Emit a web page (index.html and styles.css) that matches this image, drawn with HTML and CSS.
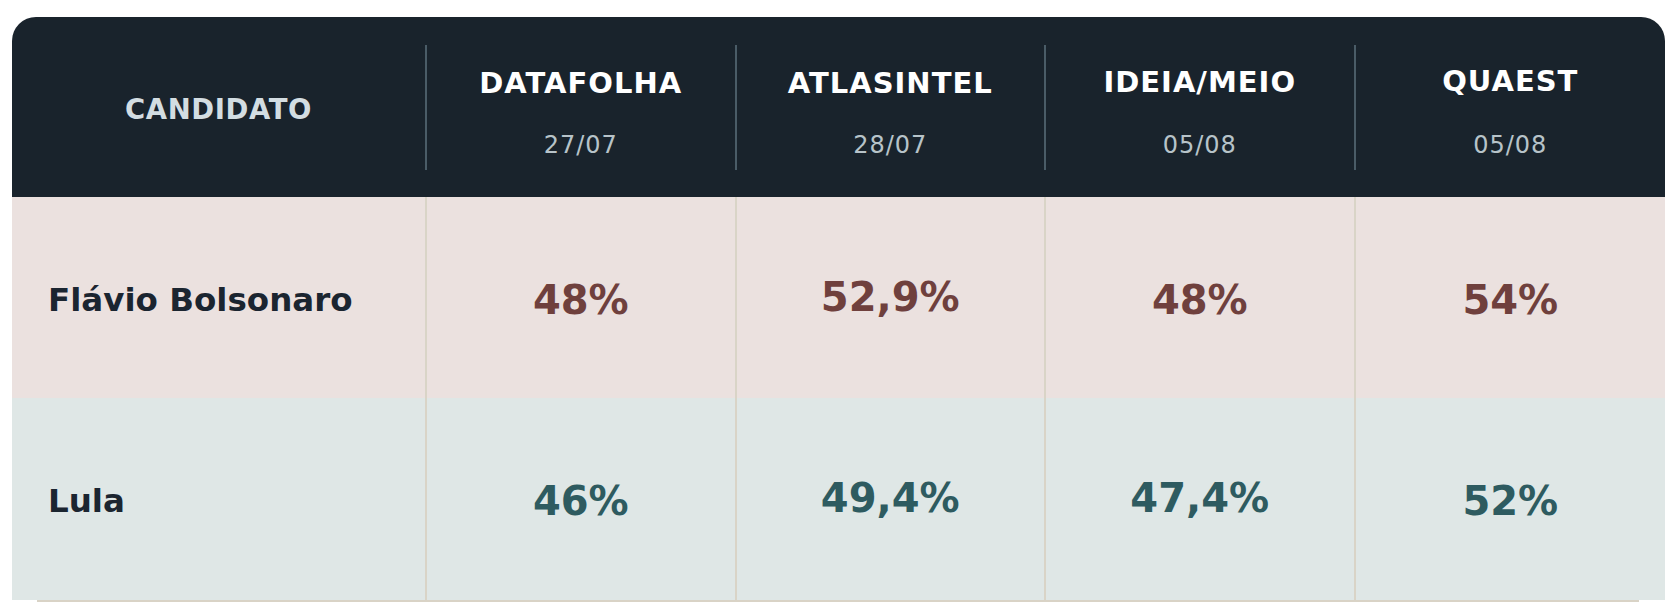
FILE: index.html
```html
<!DOCTYPE html>
<html lang="pt-BR">
<head>
<meta charset="utf-8">
<title>Pesquisas</title>
<link rel="stylesheet" href="styles.css">
</head>
<body>
<div class="card">
  <div class="row head">
    <div class="hcell first"><span class="cand">CANDIDATO</span></div>
    <div class="hcell poll"><span class="pname">DATAFOLHA</span><span class="pdate">27/07</span></div>
    <div class="hcell poll"><span class="pname">ATLASINTEL</span><span class="pdate">28/07</span></div>
    <div class="hcell poll"><span class="pname up1">IDEIA/MEIO</span><span class="pdate">05/08</span></div>
    <div class="hcell poll"><span class="pname up2">QUAEST</span><span class="pdate">05/08</span></div>
  </div>
  <div class="row body flavio">
    <div class="cell name">Flávio Bolsonaro</div>
    <div class="cell val">48%</div>
    <div class="cell val"><span class="dec">52,9%</span></div>
    <div class="cell val">48%</div>
    <div class="cell val">54%</div>
  </div>
  <div class="row body lula">
    <div class="cell name">Lula</div>
    <div class="cell val">46%</div>
    <div class="cell val"><span class="dec">49,4%</span></div>
    <div class="cell val"><span class="dec">47,4%</span></div>
    <div class="cell val">52%</div>
  </div>
</div>
<div class="rule"></div>
</body>
</html>
```

FILE: styles.css
```css
* { box-sizing: border-box; }
html, body { margin: 0; background: #ffffff; }
body {
  padding: 17px 13px 0 12px;
  font-family: "DejaVu Sans", "Liberation Sans", sans-serif;
}
.card {
  width: 1653px;
  border-radius: 24px 24px 0 0;
  overflow: hidden;
}
.rule {
  width: 1602px;
  height: 2px;
  margin-left: 25px;
  background: #d9d3c6;
}
.row {
  display: grid;
  grid-template-columns: 415px repeat(4, 1fr);
}
.head {
  background: #19232c;
  padding: 28px 0 27px;
  height: 180px;
}
.hcell {
  display: flex;
  flex-direction: column;
  align-items: center;
}
.hcell.first { justify-content: center; padding-top: 4px; }
.hcell:not(:last-child) { border-right: 2px solid #4a5c67; }
.hcell.poll { padding-top: 24px; }
.cand {
  font-size: 27.5px;
  line-height: 1;
  font-weight: bold;
  color: #d3dde2;
  letter-spacing: 0.6px;
}
.pname {
  font-size: 29px;
  line-height: 1;
  font-weight: bold;
  color: #ffffff;
  letter-spacing: 1px;
}
.pname.up1 { margin-top: -1px; margin-bottom: 1px; }
.pname.up2 { margin-top: -2px; margin-bottom: 2px; }
.pdate {
  margin-top: 35px;
  font-size: 24px;
  line-height: 1;
  color: #b7c3c9;
  letter-spacing: 1px;
}
.body .cell {
  display: flex;
  align-items: center;
  padding-top: 4px;
}
.body .cell:not(:last-child) { border-right: 2px solid #d9d4c7; }
.flavio { background: #ebe1df; height: 201px; }
.lula { background: #dfe7e6; height: 202px; }
.name {
  padding-left: 36px;
  font-size: 32.5px;
  font-weight: bold;
  color: #1b2530;
}
.val {
  justify-content: center;
  font-size: 40px;
  font-weight: bold;
}
.flavio .val { color: #6f403d; }
.lula .val { color: #2e5b60; }
.dec { padding-bottom: 6px; }
```
